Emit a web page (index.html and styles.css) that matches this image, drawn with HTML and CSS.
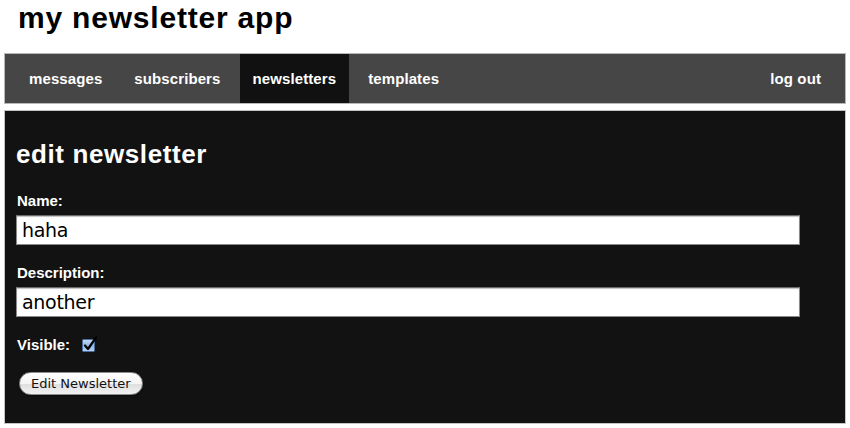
FILE: index.html
```html
<!DOCTYPE html>
<html lang="en">
<head>
<meta charset="utf-8">
<title>my newsletter app</title>
<link rel="stylesheet" href="styles.css">
</head>
<body>
<div class="page">
  <h1 class="app-title">my newsletter app</h1>
  <nav class="nav">
    <a class="nav-item" href="#">messages</a>
    <a class="nav-item" href="#">subscribers</a>
    <a class="nav-item nav-item-active" href="#">newsletters</a>
    <a class="nav-item" href="#">templates</a>
    <a class="nav-item nav-logout" href="#">log out</a>
  </nav>
  <main class="panel">
    <h2 class="panel-title">edit newsletter</h2>
    <form class="form">
      <div class="field">
        <label class="label" for="name">Name:</label>
        <input class="text-input" id="name" type="text" value="haha">
      </div>
      <div class="field">
        <label class="label" for="desc">Description:</label>
        <input class="text-input" id="desc" type="text" value="another">
      </div>
      <div class="check-row">
        <span class="label label-inline">Visible:</span>
        <span class="checkbox" role="checkbox" aria-checked="true">
          <svg width="17" height="17" viewBox="0 0 17 17">
            <defs>
              <linearGradient id="cbg" x1="0" y1="0" x2="0" y2="1">
                <stop offset="0" stop-color="#c6dcf4"/>
                <stop offset="0.5" stop-color="#8fb6e4"/>
                <stop offset="1" stop-color="#b7d3f3"/>
              </linearGradient>
            </defs>
            <rect x="1.5" y="3.5" width="12" height="12" rx="1" fill="url(#cbg)" stroke="#4a6f9c"/>
            <path d="M4 9.5 L7 13 L15 1.5" fill="none" stroke="#000" stroke-width="2.2" stroke-linecap="round" stroke-linejoin="round"/>
          </svg>
        </span>
      </div>
      <button class="button" type="button">Edit Newsletter</button>
    </form>
  </main>
</div>
</body>
</html>
```

FILE: styles.css
```css
html, body {
  margin: 0;
  padding: 0;
  background: #fff;
}

.page {
  padding: 0 4px;
  font-family: "Liberation Sans", Arial, sans-serif;
}

.app-title {
  margin: 0 0 17px 14px;
  font-size: 30px;
  line-height: 36px;
  font-weight: bold;
  color: #000;
  letter-spacing: 0.8px;
}

.nav {
  display: flex;
  align-items: stretch;
  gap: 6px;
  height: 51px;
  box-sizing: border-box;
  padding: 0 11px;
  background: #464646;
  border: 1px solid #b8b8b8;
  margin-bottom: 6px;
}

.nav-item {
  display: flex;
  align-items: center;
  padding: 0 13px;
  color: #fff;
  text-decoration: none;
  font-size: 15px;
  font-weight: bold;
  letter-spacing: 0.1px;
}

.nav-item-active {
  background: #111;
}

.nav-logout {
  margin-left: auto;
}

.panel {
  background: #121212;
  border: 1px solid #c4c4c4;
  padding: 27px 11px 26px;
  height: 314px;
  box-sizing: border-box;
}

.panel-title {
  margin: 0 0 22px 0;
  font-size: 26px;
  line-height: 32px;
  font-weight: bold;
  color: #fff;
  letter-spacing: 0.6px;
}

.form {
  display: flex;
  flex-direction: column;
  align-items: flex-start;
}

.field {
  display: flex;
  flex-direction: column;
  align-items: flex-start;
  margin-bottom: 19px;
}

.label {
  display: block;
  margin: 0 0 5px 1px;
  font-size: 15px;
  line-height: 18px;
  font-weight: bold;
  color: #fff;
}

.label-inline {
  margin: 0 0 0 1px;
}

.text-input {
  width: 784px;
  height: 30px;
  box-sizing: border-box;
  margin: 0;
  padding: 0 5px;
  background: #fff;
  border: 1px solid #8a8a8a;
  border-top-color: #6a6a6a;
  box-shadow: inset 0 1px 1px rgba(0,0,0,0.25);
  font-family: "DejaVu Sans", Verdana, sans-serif;
  font-size: 19px;
  letter-spacing: -0.3px;
  color: #000;
  outline: none;
}

.check-row {
  display: flex;
  align-items: center;
  height: 18px;
  margin-bottom: 18px;
}

.checkbox {
  display: inline-flex;
  margin-left: 11px;
  margin-top: -2px;
}

.button {
  margin-left: 3px;
  height: 23px;
  padding: 0 11px;
  border: 1px solid #8d8d8d;
  border-radius: 12px;
  background: linear-gradient(to bottom, #ffffff 0%, #f4f4f4 50%, #dedede 51%, #f2f2f2 100%);
  box-shadow: 0 1px 1px rgba(0,0,0,0.4);
  font-family: "DejaVu Sans", Verdana, sans-serif;
  font-size: 13px;
  color: #111;
  line-height: 21px;
}
```
